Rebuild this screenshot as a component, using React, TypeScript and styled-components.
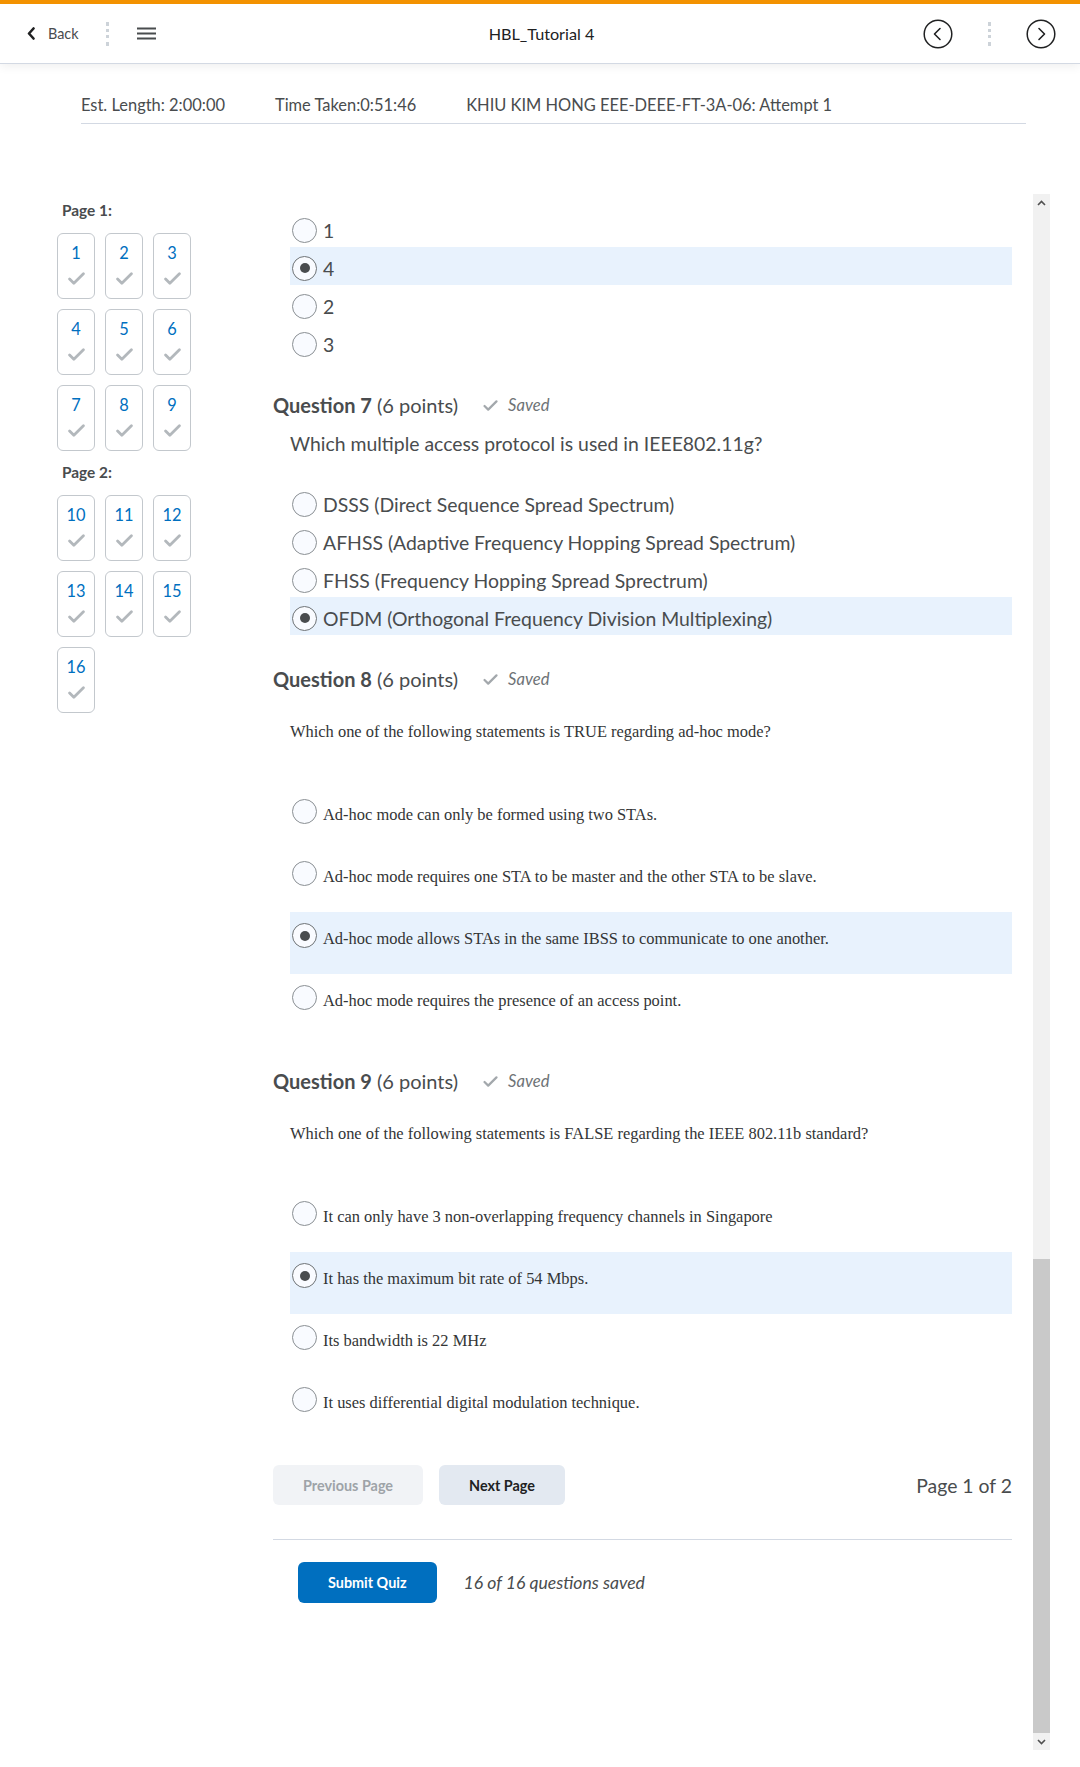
import styled, { createGlobalStyle } from 'styled-components';

const GlobalStyle = createGlobalStyle`
  body {
    margin: 0;
    background: #ffffff;
    font-family: Lato, 'Noto Sans', sans-serif;
    color: #494c4e;
  }
`;

const TopBar = styled.header`
  height: 59px;
  border-top: 4px solid #f39200;
  border-bottom: 1px solid #d3d9e3;
  box-shadow: 0 2px 10px rgba(0, 0, 0, 0.07);
  display: grid;
  grid-template-columns: 1fr auto 1fr;
  align-items: center;
  padding: 0 24px 0 27px;
`;

const BarSide = styled.div<{ $end?: boolean }>`
  display: flex;
  align-items: center;
  justify-content: ${(p) => (p.$end ? 'flex-end' : 'flex-start')};
`;

const BackLink = styled.span`
  display: flex;
  align-items: center;
  gap: 13px;
  font-size: 14.4px;
  color: #494c4e;
`;

const DotSep = styled.span<{ $before: number; $after: number }>`
  width: 0;
  height: 24px;
  border-left: 3px dotted #cdd3d9;
  margin: 0 ${(p) => p.$after}px 0 ${(p) => p.$before}px;
`;

const Title = styled.div`
  font-size: 16.2px;
  color: #202122;
`;

const InfoRow = styled.div`
  margin: 31px 54px 0 81px;
  padding-bottom: 8px;
  border-bottom: 1px solid #d3d9e3;
  display: flex;
  gap: 50px;
  font-size: 16.45px;
  line-height: 20px;
`;

const Body = styled.div`
  margin-top: 70px;
  height: 1556px;
  display: flex;
`;

const Nav = styled.nav`
  width: 273px;
  box-sizing: border-box;
  padding: 6px 0 0 57px;
  flex-shrink: 0;
`;

const NavLabel = styled.div<{ $top?: number }>`
  font-size: 15.4px;
  font-weight: 700;
  line-height: 20px;
  margin: ${(p) => p.$top ?? 0}px 0 13px 5px;
`;

const NavGrid = styled.div`
  display: grid;
  grid-template-columns: repeat(3, 38px);
  gap: 10px;
`;

const NavBox = styled.div`
  width: 38px;
  height: 66px;
  box-sizing: border-box;
  border: 1px solid #c3c8cd;
  border-radius: 6px;
  display: flex;
  flex-direction: column;
  align-items: center;
  padding-top: 9px;
`;

const NavNum = styled.span`
  font-size: 16.4px;
  line-height: 20px;
  color: #006fbf;
`;

const NavTick = styled.svg`
  margin-top: 9px;
`;

const SavedTick = styled.svg`
  display: block;
`;

const Main = styled.main`
  width: 739px;
  margin-right: 21px;
  padding-top: 15px;
`;

const OptionList = styled.div<{ $top?: number }>`
  padding-left: 17px;
  margin-top: ${(p) => p.$top ?? 0}px;
`;

const LatoOption = styled.div<{ $selected?: boolean }>`
  height: 38px;
  box-sizing: border-box;
  padding: 9px 0 5px 2px;
  display: flex;
  align-items: center;
  gap: 6px;
  font-size: 19.4px;
  background: ${(p) => (p.$selected ? '#e8f2fd' : 'transparent')};
`;

const SerifOption = styled.div<{ $selected?: boolean }>`
  height: 62px;
  box-sizing: border-box;
  padding: 11px 0 0 2px;
  display: flex;
  align-items: flex-start;
  gap: 6px;
  font-family: 'Liberation Serif', 'Times New Roman', serif;
  font-size: 16.45px;
  line-height: 18px;
  color: #333536;
  background: ${(p) => (p.$selected ? '#e8f2fd' : 'transparent')};
`;

const SerifLabel = styled.span`
  padding-top: 7px;
`;

const Radio = styled.span<{ $checked?: boolean }>`
  width: 25px;
  height: 25px;
  box-sizing: border-box;
  flex-shrink: 0;
  border-radius: 50%;
  border: 1px solid ${(p) => (p.$checked ? '#6e7376' : '#8a8f93')};
  background: #f9fbff;
  display: flex;
  align-items: center;
  justify-content: center;

  &::after {
    content: '';
    display: ${(p) => (p.$checked ? 'block' : 'none')};
    width: 10px;
    height: 10px;
    border-radius: 50%;
    background: #494c4e;
  }
`;

const QHeading = styled.h2<{ $top: number }>`
  margin: ${(p) => p.$top}px 0 0;
  font-size: 20px;
  font-weight: 400;
  line-height: 30px;
  display: flex;
  align-items: center;
  color: #494c4e;

  b {
    font-weight: 700;
    margin-right: 5px;
  }
`;

const SavedTag = styled.span`
  margin-left: 25px;
  display: flex;
  align-items: center;
  gap: 10px;
  font-size: 16.6px;
  font-style: italic;
  color: #6e7376;
`;

const LatoPrompt = styled.p`
  margin: 12px 0 0 17px;
  font-size: 19.4px;
  line-height: 24px;
`;

const SerifPrompt = styled.p`
  margin: 29px 0 0 17px;
  font-family: 'Liberation Serif', 'Times New Roman', serif;
  font-size: 16.45px;
  line-height: 18px;
  color: #333536;
`;

const PagerRow = styled.div`
  margin-top: 27px;
  display: flex;
  align-items: center;
  gap: 16px;
`;

const PageButton = styled.button<{ $disabled?: boolean }>`
  height: 40px;
  padding: 0 30px;
  border: none;
  border-radius: 6px;
  font-family: Lato, sans-serif;
  font-size: 14.4px;
  font-weight: 700;
  background: ${(p) => (p.$disabled ? '#f1f3f6' : '#e3e9f1')};
  color: ${(p) => (p.$disabled ? '#9ea3a8' : '#202122')};
`;

const PageCount = styled.span`
  margin-left: auto;
  font-size: 19.4px;
`;

const Divider = styled.hr`
  margin: 34px 0 0;
  border: none;
  border-top: 1px solid #d3d9e3;
`;

const SubmitRow = styled.div`
  margin-top: 22px;
  padding-left: 25px;
  display: flex;
  align-items: center;
  gap: 27px;
`;

const SubmitButton = styled.button`
  height: 41px;
  padding: 0 30px;
  border: none;
  border-radius: 6px;
  background: #006fbf;
  color: #ffffff;
  font-family: Lato, sans-serif;
  font-size: 14.4px;
  font-weight: 700;
`;

const SavedCount = styled.span`
  font-size: 17.6px;
  font-style: italic;
`;

const ScrollBar = styled.div`
  width: 17px;
  flex-shrink: 0;
  background: #f1f1f1;
  display: flex;
  flex-direction: column;
`;

const ScrollArrow = styled.div`
  height: 17px;
  display: flex;
  align-items: center;
  justify-content: center;
`;

const ScrollTrack = styled.div`
  flex: 1;
  display: flex;
  align-items: flex-end;
`;

const ScrollThumb = styled.div`
  width: 100%;
  height: 474px;
  background: #c9c9c9;
`;

const tickPath = 'M1.5 6.5 L5.5 10.5 L14.5 1.5';

const NavCheck = () => (
  <NavTick width="17" height="13" viewBox="0 0 16 12">
    <path d={tickPath} fill="none" stroke="#b3b8bc" strokeWidth="2.6" strokeLinecap="round" strokeLinejoin="round" />
  </NavTick>
);

const SavedCheck = () => (
  <SavedTick width="15" height="11" viewBox="0 0 16 12">
    <path d={tickPath} fill="none" stroke="#a3a8ac" strokeWidth="2.4" strokeLinecap="round" strokeLinejoin="round" />
  </SavedTick>
);

const CircleArrow = ({ dir }: { dir: 'left' | 'right' }) => (
  <svg width="30" height="30" viewBox="0 0 30 30">
    <circle cx="15" cy="15" r="13.8" fill="none" stroke="#202122" strokeWidth="1.5" />
    <path
      d={dir === 'left' ? 'M17 9.5 L11.5 15 L17 20.5' : 'M13 9.5 L18.5 15 L13 20.5'}
      fill="none"
      stroke="#202122"
      strokeWidth="1.6"
      strokeLinecap="round"
      strokeLinejoin="round"
    />
  </svg>
);

type Choice = { text: string; checked?: boolean };

const q6: Choice[] = [{ text: '1' }, { text: '4', checked: true }, { text: '2' }, { text: '3' }];

const q7: Choice[] = [
  { text: 'DSSS (Direct Sequence Spread Spectrum)' },
  { text: 'AFHSS (Adaptive Frequency Hopping Spread Spectrum)' },
  { text: 'FHSS (Frequency Hopping Spread Sprectrum)' },
  { text: 'OFDM (Orthogonal Frequency Division Multiplexing)', checked: true },
];

const q8: Choice[] = [
  { text: 'Ad-hoc mode can only be formed using two STAs.' },
  { text: 'Ad-hoc mode requires one STA to be master and the other STA to be slave.' },
  { text: 'Ad-hoc mode allows STAs in the same IBSS to communicate to one another.', checked: true },
  { text: 'Ad-hoc mode requires the presence of an access point.' },
];

const q9: Choice[] = [
  { text: 'It can only have 3 non-overlapping frequency channels in Singapore' },
  { text: 'It has the maximum bit rate of 54 Mbps.', checked: true },
  { text: 'Its bandwidth is 22 MHz' },
  { text: 'It uses differential digital modulation technique.' },
];

const Heading = ({ num, top }: { num: number; top: number }) => (
  <QHeading $top={top}>
    <b>Question {num}</b>(6 points)
    <SavedTag>
      <SavedCheck />
      Saved
    </SavedTag>
  </QHeading>
);

const SerifChoices = ({ items }: { items: Choice[] }) => (
  <OptionList $top={47}>
    {items.map((c) => (
      <SerifOption key={c.text} $selected={c.checked}>
        <Radio $checked={c.checked} />
        <SerifLabel>{c.text}</SerifLabel>
      </SerifOption>
    ))}
  </OptionList>
);

const LatoChoices = ({ items, top }: { items: Choice[]; top?: number }) => (
  <OptionList $top={top}>
    {items.map((c) => (
      <LatoOption key={c.text} $selected={c.checked}>
        <Radio $checked={c.checked} />
        {c.text}
      </LatoOption>
    ))}
  </OptionList>
);

const NavBlock = ({ nums }: { nums: number[] }) => (
  <NavGrid>
    {nums.map((n) => (
      <NavBox key={n}>
        <NavNum>{n}</NavNum>
        <NavCheck />
      </NavBox>
    ))}
  </NavGrid>
);

const App = () => {
  return (
    <>
      <GlobalStyle />
      <TopBar>
        <BarSide>
          <BackLink>
            <svg width="8" height="13" viewBox="0 0 8 13">
              <path d="M6.5 1.5 L2 6.5 L6.5 11.5" fill="none" stroke="#202122" strokeWidth="2.6" strokeLinecap="round" strokeLinejoin="round" />
            </svg>
            Back
          </BackLink>
          <DotSep $before={27} $after={28} />
          <svg width="19" height="13" viewBox="0 0 19 13">
            <path d="M0 1.5 H19 M0 6.5 H19 M0 11.5 H19" stroke="#494c4e" strokeWidth="2" />
          </svg>
        </BarSide>
        <Title>HBL_Tutorial 4</Title>
        <BarSide $end>
          <CircleArrow dir="left" />
          <DotSep $before={35} $after={35} />
          <CircleArrow dir="right" />
        </BarSide>
      </TopBar>

      <InfoRow>
        <span>Est. Length: 2:00:00</span>
        <span>Time Taken:0:51:46</span>
        <span>KHIU KIM HONG EEE-DEEE-FT-3A-06: Attempt 1</span>
      </InfoRow>

      <Body>
        <Nav>
          <NavLabel>Page 1:</NavLabel>
          <NavBlock nums={[1, 2, 3, 4, 5, 6, 7, 8, 9]} />
          <NavLabel $top={11}>Page 2:</NavLabel>
          <NavBlock nums={[10, 11, 12, 13, 14, 15, 16]} />
        </Nav>

        <Main>
          <LatoChoices items={q6} />

          <Heading num={7} top={29} />
          <LatoPrompt>Which multiple access protocol is used in IEEE802.11g?</LatoPrompt>
          <LatoChoices items={q7} top={27} />

          <Heading num={8} top={29} />
          <SerifPrompt>Which one of the following statements is TRUE regarding ad-hoc mode?</SerifPrompt>
          <SerifChoices items={q8} />

          <Heading num={9} top={30} />
          <SerifPrompt>Which one of the following statements is FALSE regarding the IEEE 802.11b standard?</SerifPrompt>
          <SerifChoices items={q9} />

          <PagerRow>
            <PageButton $disabled>Previous Page</PageButton>
            <PageButton>Next Page</PageButton>
            <PageCount>Page 1 of 2</PageCount>
          </PagerRow>
          <Divider />
          <SubmitRow>
            <SubmitButton>Submit Quiz</SubmitButton>
            <SavedCount>16 of 16 questions saved</SavedCount>
          </SubmitRow>
        </Main>

        <ScrollBar>
          <ScrollArrow>
            <svg width="9" height="6" viewBox="0 0 9 6">
              <path d="M1 5 L4.5 1.5 L8 5" fill="none" stroke="#505050" strokeWidth="1.6" />
            </svg>
          </ScrollArrow>
          <ScrollTrack>
            <ScrollThumb />
          </ScrollTrack>
          <ScrollArrow>
            <svg width="9" height="6" viewBox="0 0 9 6">
              <path d="M1 1 L4.5 4.5 L8 1" fill="none" stroke="#505050" strokeWidth="1.6" />
            </svg>
          </ScrollArrow>
        </ScrollBar>
      </Body>
    </>
  );
};

export default App;
